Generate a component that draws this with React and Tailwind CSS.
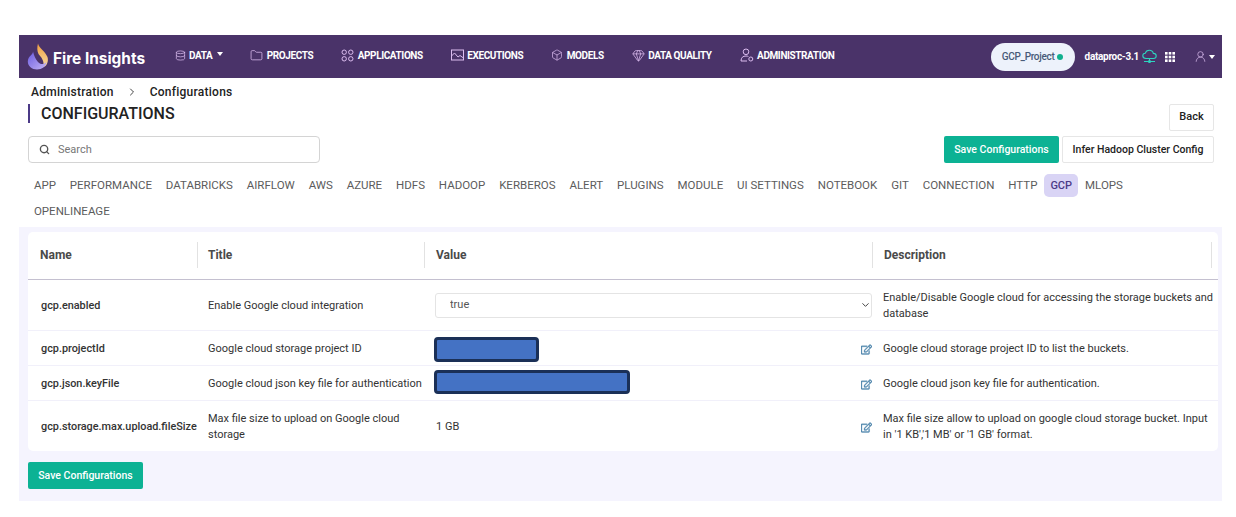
import { Database, Folder, Box, Gem, UserRound, Search, ChevronRight, ChevronDown } from "lucide-react"
import { FaRegEdit } from "react-icons/fa"

const navItems = [
  { label: "PROJECTS", icon: <Folder size={13} strokeWidth={1.4} /> },
  { label: "APPLICATIONS", icon: <AppsIcon /> },
  { label: "EXECUTIONS", icon: <ChartIcon /> },
  { label: "MODELS", icon: <Box size={12} strokeWidth={1.4} /> },
  { label: "DATA QUALITY", icon: <Gem size={13} strokeWidth={1.4} /> },
  { label: "ADMINISTRATION", icon: <AdminIcon /> },
]

const tabs = ["APP", "PERFORMANCE", "DATABRICKS", "AIRFLOW", "AWS", "AZURE", "HDFS", "HADOOP", "KERBEROS", "ALERT", "PLUGINS", "MODULE", "UI SETTINGS", "NOTEBOOK", "GIT", "CONNECTION", "HTTP", "GCP", "MLOPS", "OPENLINEAGE"]

const columns = [
  { label: "Name", width: "w-[170px] pl-[12px]" },
  { label: "Title", width: "w-[227px] pl-[10px]" },
  { label: "Value", width: "w-[448px] pl-[11px]" },
  { label: "Description", width: "w-[339px] pl-[11px]" },
]

function AppsIcon() {
  return (
    <svg width="13" height="13" viewBox="0 0 13 13" fill="none" stroke="currentColor" strokeWidth="1">
      <circle cx="3.2" cy="3.2" r="2.2" />
      <circle cx="9.8" cy="3.2" r="2.2" />
      <circle cx="3.2" cy="9.8" r="2.2" />
      <circle cx="9.8" cy="9.8" r="2.2" />
    </svg>
  )
}

function ChartIcon() {
  return (
    <svg width="13" height="12" viewBox="0 0 13 12" fill="none" stroke="currentColor" strokeWidth="1">
      <rect x="0.5" y="1" width="12" height="10" />
      <path d="M0.5 7 L3.5 4 L7 8 L9 6.5 L12.5 9" />
    </svg>
  )
}

function AdminIcon() {
  return (
    <svg width="14" height="14" viewBox="0 0 14 14" fill="none" stroke="currentColor" strokeWidth="1">
      <circle cx="6" cy="3.8" r="2.8" />
      <path d="M1 13 C1 9.5 3 8 6 8 C7 8 7.8 8.2 8.4 8.5 M1 13 H7" />
      <circle cx="10.8" cy="11" r="2" />
    </svg>
  )
}

function CloudNetIcon() {
  return (
    <svg width="15" height="15" viewBox="0 0 15 15" fill="none" stroke="#2dd4bf" strokeWidth="1.1">
      <path d="M4 9.5 C1.8 9.5 0.8 8 0.8 6.8 C0.8 5.3 2 4.2 3.3 4.2 C3.8 2.4 5.4 1.2 7.3 1.2 C9.4 1.2 11 2.6 11.3 4.4 C13 4.4 14.2 5.5 14.2 7 C14.2 8.4 13 9.5 11.4 9.5 Z" />
      <path d="M7.5 9.5 V14 M2 12.5 H13" />
      <circle cx="7.5" cy="12.5" r="1" fill="#2dd4bf" />
    </svg>
  )
}

function GridIcon() {
  return (
    <svg width="10" height="10" viewBox="0 0 10 10" fill="#fff">
      <rect x="0" y="0" width="2.6" height="2.6" />
      <rect x="3.7" y="0" width="2.6" height="2.6" />
      <rect x="7.4" y="0" width="2.6" height="2.6" />
      <rect x="0" y="3.7" width="2.6" height="2.6" />
      <rect x="3.7" y="3.7" width="2.6" height="2.6" />
      <rect x="7.4" y="3.7" width="2.6" height="2.6" />
      <rect x="0" y="7.4" width="2.6" height="2.6" />
      <rect x="3.7" y="7.4" width="2.6" height="2.6" />
      <rect x="7.4" y="7.4" width="2.6" height="2.6" />
    </svg>
  )
}

function Logo() {
  return (
    <svg width="22" height="27" viewBox="0 0 22 27">
      <defs>
        <linearGradient id="flame" x1="0.5" y1="0" x2="0.5" y2="1">
          <stop offset="0" stopColor="#f0a040" />
          <stop offset="1" stopColor="#f7d9a0" />
        </linearGradient>
        <linearGradient id="flameBody" x1="0" y1="0" x2="1" y2="1">
          <stop offset="0" stopColor="#6a5be0" />
          <stop offset="1" stopColor="#c4b5f5" />
        </linearGradient>
      </defs>
      <path d="M11 0.5 C12 5 18 8 20.5 14 C22 19 19 24 16 24 C18 18 14 14 11.5 11 C10 8 10 4 11 0.5 Z" fill="url(#flame)" />
      <path d="M6 8.5 C6 12 1 13 0.8 18.5 C0.8 23 5 26.5 10 26.5 C15 26.5 19 23.5 19.5 19 C17 22 13 21.5 11 19 C8.5 16 7 12.5 6 8.5 Z" fill="url(#flameBody)" />
    </svg>
  )
}

function EditIcon() {
  return <FaRegEdit stroke="currentColor" strokeWidth="18" className="text-[11px] text-[#4f86ad] shrink-0" />
}

const Redacted = ({ width, extra }) => (
  <div className={`${width} ${extra} rounded-[4px] border-[3px] border-[#1b3057] bg-[#4472c4]`} />
)

const Navbar = () => (
  <nav className="h-[43px] bg-[#4a3369] flex items-center text-white">
    <div className="flex items-center gap-[4px] pl-[8px] w-[156px] shrink-0">
      <Logo />
      <span className="pt-[4px] text-[15.4px] font-bold font-['Inter',sans-serif]">Fire Insights</span>
    </div>
    <div className="flex items-center gap-[2px] text-[10px] font-bold tracking-[-0.4px] pb-[3px]">
      <Database size={11} className="text-[#dcbdf0]" strokeWidth={1.6} />
      <span className="ml-[1px]">DATA</span>
      <span className="ml-[3px] border-x-[3px] border-t-[4px] border-x-transparent border-t-white mb-[2px]" />
    </div>
    <ul className="flex items-center gap-[28px] ml-[27px] pb-[3px]">
      {navItems.map(item => (
        <li key={item.label} className="flex items-center gap-[3.5px] text-[10px] font-bold tracking-[-0.4px]">
          <span className="text-[#dcbdf0]">{item.icon}</span>
          <span>{item.label}</span>
        </li>
      ))}
    </ul>
    <div className="ml-auto flex items-center">
      <div className="h-[28px] w-[84px] rounded-full bg-[#edf2fb] flex items-center justify-center gap-[3px] text-[10px] font-medium tracking-[-0.3px] text-[#475a78]">
        GCP_Project
        <span className="h-[6px] w-[6px] rounded-full bg-[#10b08f]" />
      </div>
      <span className="ml-[10px] text-[10px] font-bold tracking-[-0.3px]">dataproc-3.1</span>
      <span className="ml-[3px]"><CloudNetIcon /></span>
      <span className="ml-[8px]"><GridIcon /></span>
      <UserRound size={13} strokeWidth={1.3} className="ml-[19px] text-[#dcbdf0]" />
      <span className="ml-[2px] mr-[7px] border-x-[3px] border-t-[4px] border-x-transparent border-t-white" />
    </div>
  </nav>
)

const Header = () => (
  <div className="flex justify-between pl-[9px] pr-[8px]">
    <div className="w-[292px]">
      <div className="h-[26px] flex items-center pl-[3px] pt-[1px] text-[12px] font-medium tracking-[0.25px] text-[#222]">
        Administration
        <ChevronRight size={12} className="mx-[12px] text-[#444]" />
        Configurations
      </div>
      <h1 className="h-[19px] border-l-2 border-[#4b3a87] pl-[11px] text-[16px] leading-[19px] font-medium text-[#222]">CONFIGURATIONS</h1>
      <div className="mt-[13px] h-[27px] rounded-[4px] border border-[#d4d4d4] flex items-center pl-[10px] gap-[8px] text-[11px] text-[#777]">
        <Search size={11} strokeWidth={3} className="text-[#555]" />
        <span className="pt-[1px]">Search</span>
      </div>
    </div>
    <div className="flex flex-col items-end pt-[26px]">
      <button type="button" className="h-[27px] w-[45px] rounded-[2px] border border-[#e6e6e6] text-[11px] font-medium text-[#222]">Back</button>
      <div className="mt-[5px] flex gap-[3px]">
        <button type="button" className="h-[27px] w-[115px] pt-[1px] rounded-[2px] bg-[#0cb294] text-[10.5px] font-medium text-white">Save Configurations</button>
        <button type="button" className="h-[27px] w-[152px] pt-[1px] rounded-[2px] border border-[#e6e6e6] text-[10.5px] font-medium text-[#222]">Infer Hadoop Cluster Config</button>
      </div>
    </div>
  </div>
)

const Tabs = () => (
  <ul className="mt-[9px] pl-[8px] pr-[60px] flex flex-wrap">
    {tabs.map(tab => (
      <li key={tab} className="h-[26px] flex items-center">
        <span className={`h-[23px] pt-[2px] flex items-center rounded-[5px] ${tab === "GCP" ? "px-[6px] text-[11px] bg-[#d9d4f5] text-[#4b3a87] font-medium" : "px-[6.95px] text-[11.5px] text-[#5c5c5c]"}`}>
          {tab}
        </span>
      </li>
    ))}
  </ul>
)

const Table = () => (
  <div className="w-[1190px] rounded-[5px] bg-white text-[11px] text-[#333]">
    <div className="h-[48px] pb-[2px] flex items-center border-b border-[#c4c0d0]">
      {columns.map(col => (
        <div key={col.label} className={`${col.width} h-[26px] flex items-center text-[12px] font-bold text-[#4a4a4a] border-r border-[#e2e2e2]`}>
          {col.label}
        </div>
      ))}
    </div>
    <div className="h-[51px] pt-[2px] flex items-center border-b border-[#f1f0fa]">
      <div className="w-[169px] pl-[13px] font-medium text-[10.85px]">gcp.enabled</div>
      <div className="w-[227px] pl-[11px]">Enable Google cloud integration</div>
      <div className="w-[448px] pl-[11px] pb-[2px]">
        <div className="relative">
          <select className="w-full h-[25px] pl-[14px] pt-[1px] appearance-none rounded-[3px] border border-[#e4e4e4] text-[11px] text-[#555] bg-white">
            <option>true</option>
          </select>
          <ChevronDown size={11} strokeWidth={2} className="absolute right-[1px] top-1/2 -translate-y-1/2 pointer-events-none text-[#333]" />
        </div>
      </div>
      <div className="w-[346px] pl-[11px] pr-[4px] leading-[16px]">Enable/Disable Google cloud for accessing the storage buckets and database</div>
    </div>
    <div className="h-[35px] pt-[2px] flex items-center border-b border-[#f1f0fa]">
      <div className="w-[169px] pl-[13px] font-medium text-[10.85px]">gcp.projectId</div>
      <div className="w-[227px] pl-[11px]">Google cloud storage project ID</div>
      <div className="w-[448px] pl-[9.5px] flex items-center justify-between">
        <Redacted width="w-[105px]" extra="h-[25px]" />
        <EditIcon />
      </div>
      <div className="w-[346px] pl-[11px]">Google cloud storage project ID to list the buckets.</div>
    </div>
    <div className="h-[35px] pt-[2px] flex items-center border-b border-[#f1f0fa]">
      <div className="w-[169px] pl-[13px] font-medium text-[10.85px]">gcp.json.keyFile</div>
      <div className="w-[227px] pl-[11px] whitespace-nowrap">Google cloud json key file for authentication</div>
      <div className="w-[448px] pl-[9.5px] flex items-center justify-between">
        <Redacted width="w-[196px]" extra="h-[24px] mb-[5px]" />
        <EditIcon />
      </div>
      <div className="w-[346px] pl-[11px]">Google cloud json key file for authentication.</div>
    </div>
    <div className="h-[50px] pt-[2px] flex items-center leading-[16px]">
      <div className="w-[169px] pl-[13px] font-medium text-[10.85px] whitespace-nowrap">gcp.storage.max.upload.fileSize</div>
      <div className="w-[227px] pl-[11px] pr-[20px]">Max file size to upload on Google cloud storage</div>
      <div className="w-[448px] pl-[12px] flex items-center justify-between">
        1 GB
        <EditIcon />
      </div>
      <div className="w-[346px] pl-[11px] pr-[4px]">Max file size allow to upload on google cloud storage bucket. Input in '1 KB','1 MB' or '1 GB' format.</div>
    </div>
  </div>
)

const App = () => (
  <div className="bg-white pt-[35px] pb-[16px] px-[19px] font-['Roboto',sans-serif]">
    <div className="w-[1203px]">
      <Navbar />
      <Header />
      <Tabs />
      <section className="mt-[3px] h-[274px] bg-[#f5f4fe] pt-[5px] pl-[9px]">
        <Table />
        <button type="button" className="mt-[11px] h-[27px] w-[115px] pt-[1px] rounded-[2px] bg-[#0cb294] text-[10.5px] font-medium text-white">Save Configurations</button>
      </section>
    </div>
  </div>
)

export default App
